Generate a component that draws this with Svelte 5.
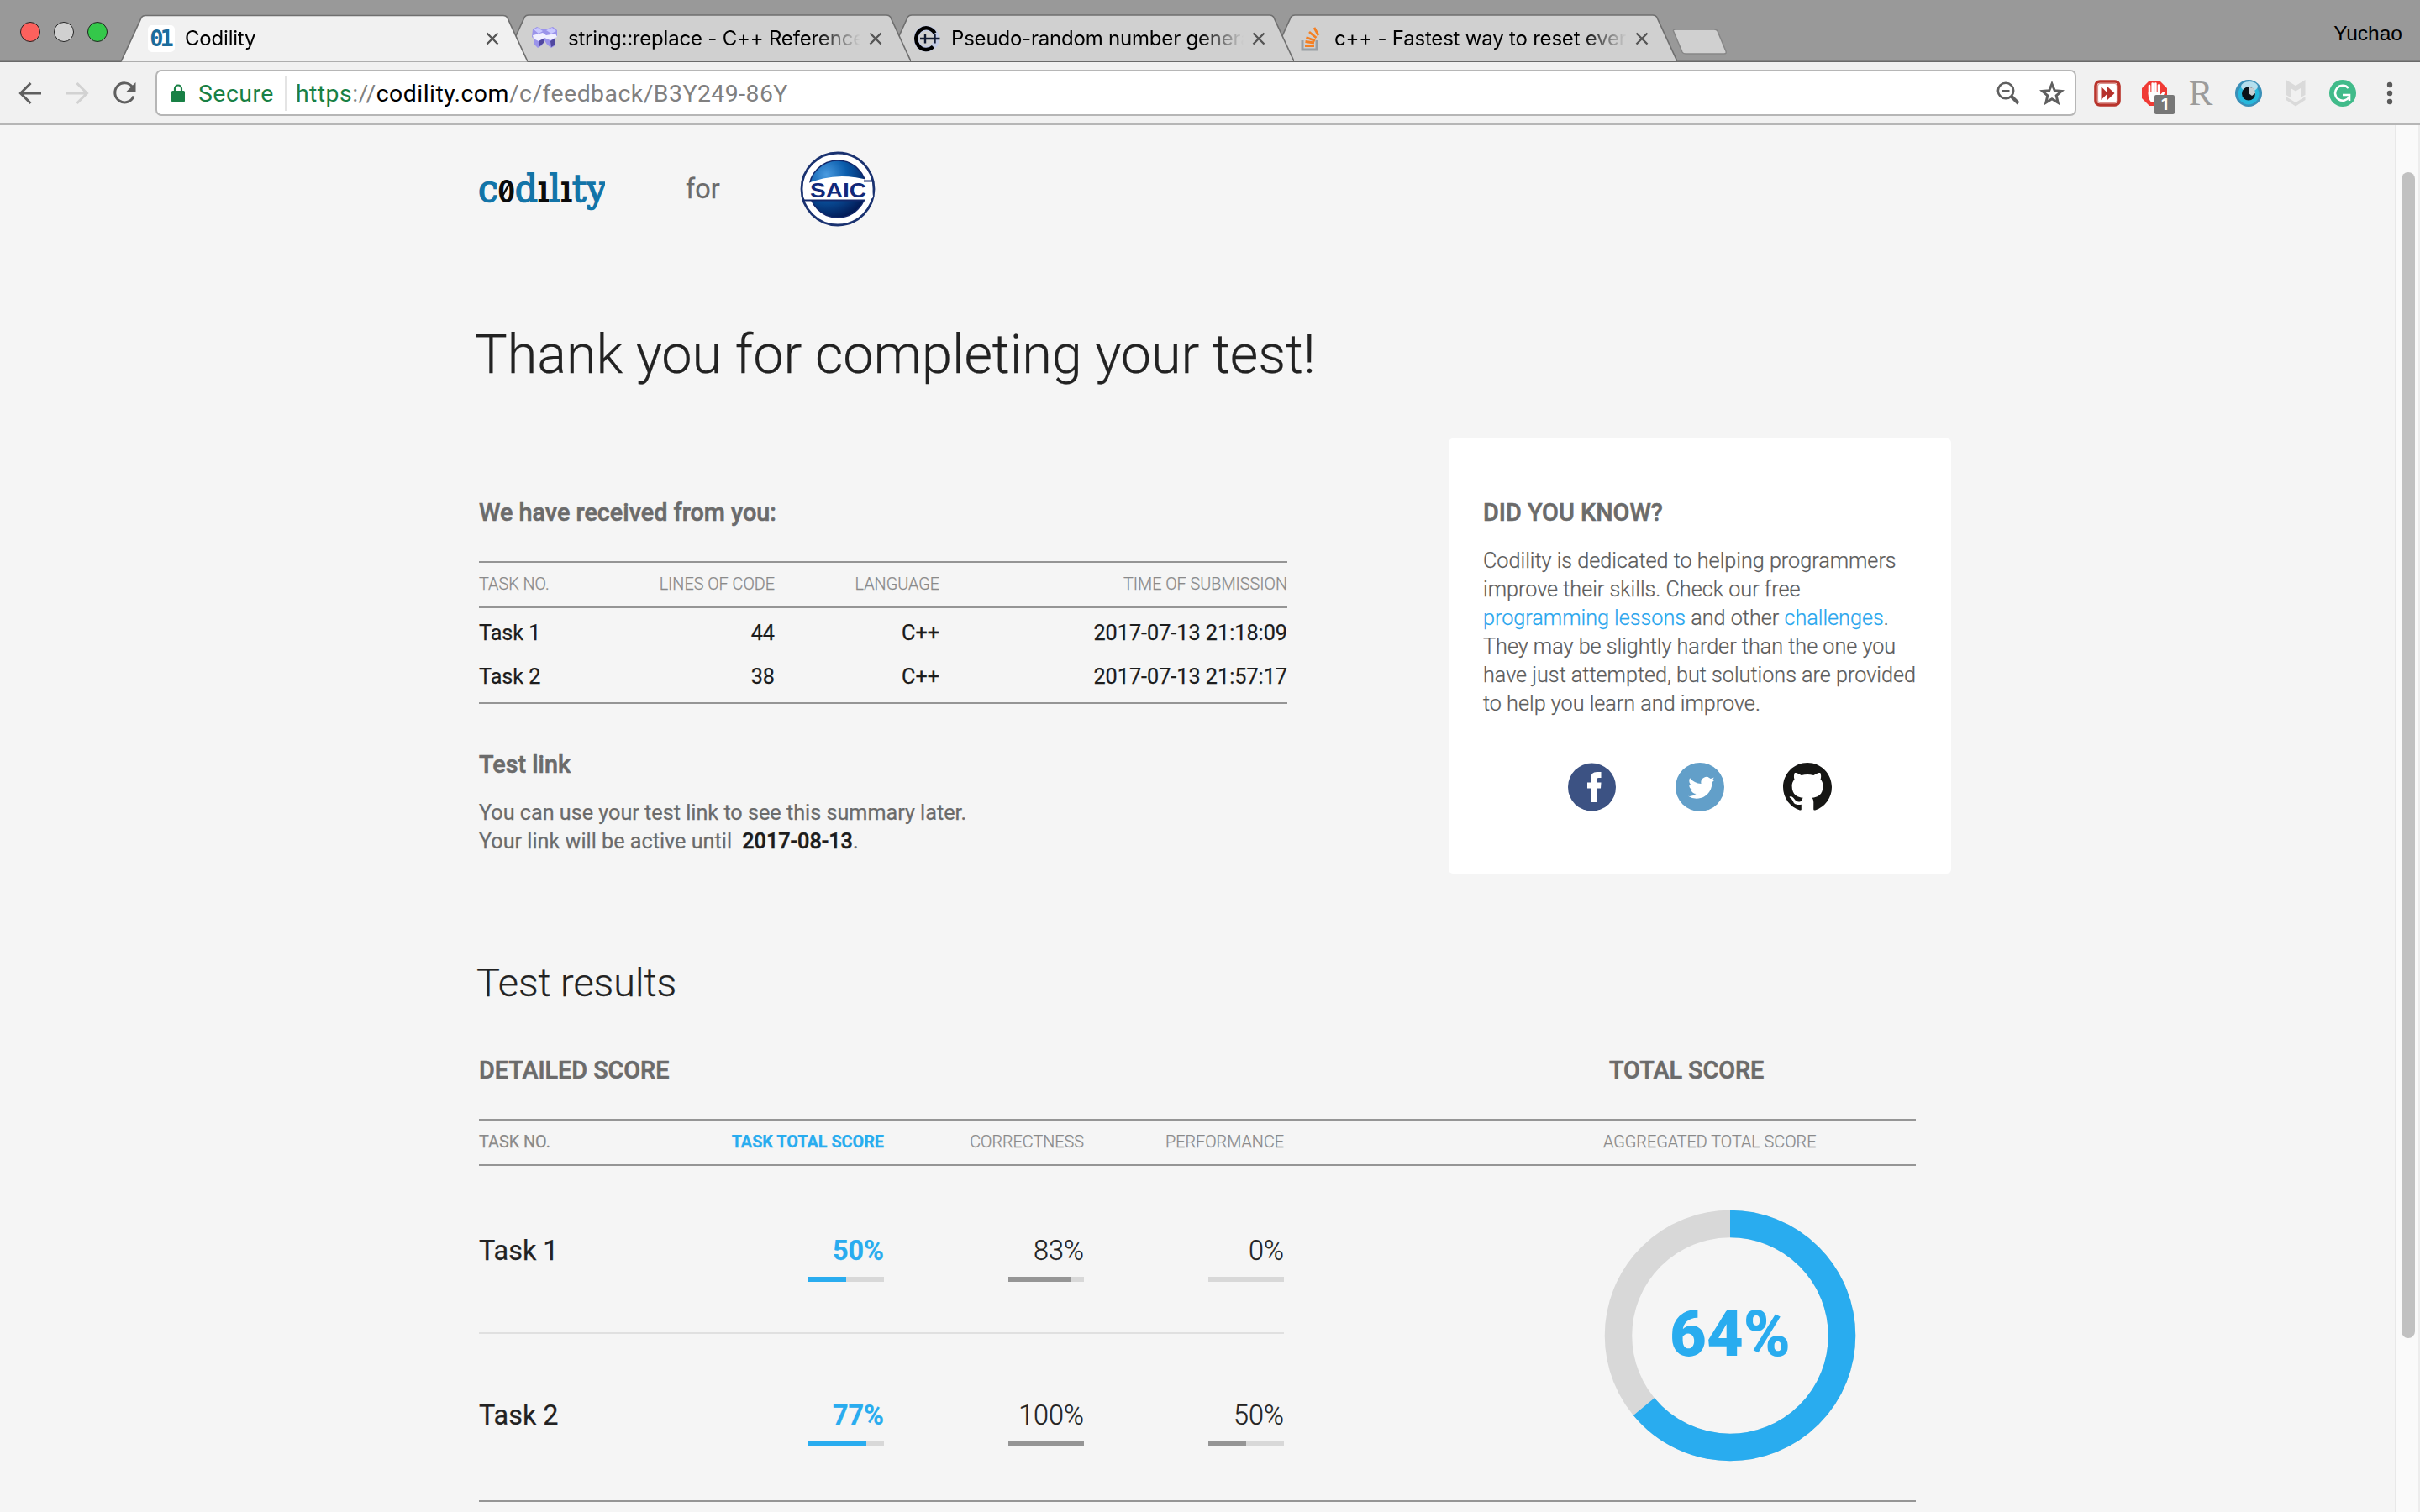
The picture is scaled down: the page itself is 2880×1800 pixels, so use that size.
<script>
  const tabs = [
    { title: 'Codility', icon: 'codility', active: true },
    { title: 'string::replace - C++ Reference', icon: 'cubes' },
    { title: 'Pseudo-random number generation', icon: 'cpp' },
    { title: 'c++ - Fastest way to reset every value', icon: 'so' },
  ];
  const submissions = [
    { task: 'Task 1', lines: 44, language: 'C++', time: '2017-07-13 21:18:09' },
    { task: 'Task 2', lines: 38, language: 'C++', time: '2017-07-13 21:57:17' },
  ];
  const scores = [
    { task: 'Task 1', values: [50, 83, 0] },
    { task: 'Task 2', values: [77, 100, 50] },
  ];
  const total = 64;
  const radius = 133;
  const ring = 2 * Math.PI * radius;
</script>

<div class="window">
  <header class="tabstrip">
    <div class="lights"><i class="red"></i><i class="idle"></i><i class="green"></i></div>
    <div class="tabs">
      {#each tabs as tab, i}
        <div class="tab tab{i}" class:active={tab.active}>
          <svg class="shape" viewBox="0 0 484 56">
            <path d="M0 56 L24.500 3 Q26 1 29 1 H455 Q458 1 459.500 3 L484 56" />
          </svg>
          {#if tab.icon === 'codility'}
            <span class="favicon badge01">01</span>
          {:else if tab.icon === 'cubes'}
            <svg class="favicon" viewBox="0 0 32 32">
              <path d="M2 5 L7 2 L14 5 L20 4 L26 2 L31 6 V13 L29 15 V24 L24 27 L19 23 L16 18 L13 24 L8 27 L4 23 L3 16 L1 14Z" fill="#9a93ea" />
              <path d="M3 5 L8 3 L14 7 L9 10Z M18 6 L25 3 L30 7 L24 10Z" fill="#c9c8ff" />
              <path d="M2 12 L14 9 L18 12 L29 10 L31 14 L23 18 L16 15 L9 19 L3 16Z" fill="#f0efff" />
              <path d="M9 19 L15 16 V21 L9 26Z M23 19 L29 15 V23 L24 26Z" fill="#5148a0" />
            </svg>
          {:else if tab.icon === 'cpp'}
            <svg class="favicon" viewBox="0 0 32 32">
              <circle cx="14.500" cy="16" r="15.500" fill="#c3cbe4" />
              <circle cx="14.500" cy="16" r="9" fill="#d0d0d0" />
              <path d="M24.500 9.500 A12 12.800 0 1 0 22.500 25.500" fill="none" stroke="#000" stroke-width="4.500" />
              <path d="M7 16 H30.500 M13 10.500 V21.500 M24.500 10.500 V21.500" fill="none" stroke="#111a33" stroke-width="2.400" />
            </svg>
          {:else}
            <svg class="favicon" viewBox="0 0 32 32">
              <path d="M6 18 V29 H23 V18" fill="none" stroke="#9a9fa4" stroke-width="3" />
              <path d="M9 24.500 H20 M9.500 19.500 L20 21 M10.500 14.500 L21 18.500 M14 8 L22.500 15 M20 3 L25 12" fill="none" stroke="#f48024" stroke-width="2.800" />
            </svg>
          {/if}
          <span class="title">{tab.title}</span>
          <svg class="close" viewBox="0 0 16 16"><path d="M1.500 1.500 L14.500 14.500 M14.500 1.500 L1.500 14.500" /></svg>
        </div>
      {/each}
    </div>
    <svg class="newtab" viewBox="0 0 66 32">
      <path d="M1.500 3 Q1 1 4 1 H50 Q53 1 54 3 L64 27 Q65 30 62 30 H16 Q13 30 12 28Z" fill="#d0d0d0" stroke="#868686" stroke-width="1.500" />
    </svg>
    <span class="user">Yuchao</span>
  </header>

  <nav class="toolbar">
    <div class="navicons">
      <svg viewBox="0 0 28 28"><path d="M27 14 H3 M14.500 2 L2.500 14 L14.500 26" fill="none" stroke="#5f5f5f" stroke-width="3" /></svg>
      <svg viewBox="0 0 28 28"><path d="M1 14 H25 M13.500 2 L25.500 14 L13.500 26" fill="none" stroke="#d2d2d2" stroke-width="3" /></svg>
      <svg viewBox="0 0 28 28">
        <path d="M23.500 6.500 A11.500 11.500 0 1 0 25 17.500" fill="none" stroke="#5f5f5f" stroke-width="3" />
        <path d="M27.500 1 V12.500 H16Z" fill="#5f5f5f" />
      </svg>
    </div>
    <div class="address">
      <svg class="lock" viewBox="0 0 16 22">
        <path d="M4 10 V5.500 A4 4 0 0 1 12 5.500 V10" fill="none" stroke="#188045" stroke-width="2.200" />
        <rect x="0" y="8" width="16" height="13.500" rx="1.500" fill="#188045" />
      </svg>
      <span class="secure">Secure</span>
      <span class="url"><b class="scheme">https</b>://<b class="host">codility.com</b>/c/feedback/B3Y249-86Y</span>
      <svg class="mag" viewBox="0 0 28 28">
        <circle cx="11" cy="11" r="9.200" fill="none" stroke="#5f5f5f" stroke-width="2.600" />
        <path d="M6.500 11 H15.500" stroke="#5f5f5f" stroke-width="2" />
        <path d="M18 18 L26 26" stroke="#5f5f5f" stroke-width="4" />
      </svg>
      <svg class="star" viewBox="0 0 30 30">
        <path d="M15 4 L18.200 11.700 L26.500 12.400 L20.200 17.900 L22.100 26 L15 21.700 L7.900 26 L9.800 17.900 L3.500 12.400 L11.800 11.700Z" fill="none" stroke="#5f5f5f" stroke-width="3" />
      </svg>
    </div>
    <div class="extensions">
      <svg viewBox="0 0 32 32">
        <rect x="2" y="2" width="28" height="28" rx="5" fill="#fff" stroke="#b9342c" stroke-width="3.600" />
        <rect x="4.500" y="4.500" width="23" height="23" rx="3" fill="none" stroke="#dc928d" stroke-width="1.200" />
        <path d="M8.500 8 L16.500 16 L8.500 24Z M16 8 L24.500 16 L16 24Z" fill="#b5302a" />
      </svg>
      <div class="blocker">
        <svg viewBox="0 0 32 32">
          <path d="M10 1 H22 L31 10 V22 L22 31 H10 L1 22 V10Z" fill="#f03a35" />
          <path d="M10 17 V7 M13.700 15 V4.500 M17.400 15 V4.500 M21 16 V6.500" stroke="#fff" stroke-width="2.600" stroke-linecap="round" />
          <path d="M8.700 14 H22.300 V18.500 L26 14.500 Q28.500 14 28 16 L23 27 H12.500 Q8.700 23 8.700 18Z" fill="#fff" />
        </svg>
        <span>1</span>
      </div>
      <span class="letter">R</span>
      <svg viewBox="0 0 32 32">
        <circle cx="16" cy="16" r="16" fill="#3a8fb8" />
        <circle cx="16" cy="17" r="12.500" fill="#27b8dc" />
        <ellipse cx="17" cy="8" rx="10" ry="6" fill="#b4dfee" />
        <circle cx="16" cy="16.500" r="8" fill="#0b1218" />
        <path d="M16 9 Q24 8 24 16 L20 19 L16 16Z" fill="#c7cfd3" />
      </svg>
      <svg viewBox="0 0 32 32">
        <path d="M4.500 0 L16 7 L27.500 0 V18 L22 21 V10 L16 13.500 L10 10 V21 L4.500 18Z" fill="#dadada" />
        <path d="M4.500 20 L16 27 L27.500 20 V24 L16 31.500 L4.500 24Z" fill="#dadada" />
      </svg>
      <svg viewBox="0 0 32 32">
        <circle cx="16" cy="16" r="16" fill="#41bb8a" />
        <path d="M22.800 9.800 A9 9 0 1 0 24 20" fill="none" stroke="#fff" stroke-width="2.600" />
        <path d="M16 18 H25 M24 16.800 V25" fill="none" stroke="#fff" stroke-width="2.600" />
      </svg>
      <svg class="dots" viewBox="0 0 8 28"><circle cx="4" cy="4" r="3.200" /><circle cx="4" cy="14" r="3.200" /><circle cx="4" cy="24" r="3.200" /></svg>
    </div>
  </nav>

  <div class="viewport">
    <main>
      <div class="brand">
        <svg class="codility" viewBox="0 0 150 50">
          <text x="-1" y="36.500" textLength="153" lengthAdjust="spacingAndGlyphs">c<tspan class="zero">0</tspan>d<tspan class="dark">ı</tspan>l<tspan class="dark">ı</tspan>ty</text>
          <path d="M27 32 L36 16" stroke="#0a0a0a" stroke-width="2.500" />
        </svg>
        <span class="for">for</span>
        <svg class="saic" viewBox="0 0 90 90">
          <defs>
            <radialGradient id="globe" cx="0.3" cy="0.25" r="0.8">
              <stop offset="0" stop-color="#4a9be0" />
              <stop offset="0.45" stop-color="#0a5cab" />
              <stop offset="1" stop-color="#021a55" />
            </radialGradient>
          </defs>
          <circle cx="45" cy="45" r="43" fill="#fff" stroke="#1a3270" stroke-width="2.800" />
          <circle cx="45" cy="45" r="34" fill="url(#globe)" stroke="#12286b" stroke-width="1.500" />
          <path d="M5 40 Q45 22 85 36 L87 54 Q86 58 80 58 H10 Q3 58 4 50Z" fill="#fff" />
          <path d="M76 35.500 H87 M4 58.500 H78" stroke="#12286b" stroke-width="2" />
          <text x="12" y="54.500" textLength="67" lengthAdjust="spacingAndGlyphs">SAIC</text>
        </svg>
      </div>

      <h1>Thank you for completing your test!</h1>

      <div class="summary">
        <section class="received">
          <h3>We have received from you:</h3>
          <div class="grid head">
            <span>TASK NO.</span><span>LINES OF CODE</span><span>LANGUAGE</span><span>TIME OF SUBMISSION</span>
          </div>
          <div class="body">
            {#each submissions as s}
              <div class="grid row">
                <span>{s.task}</span><span>{s.lines}</span><span>{s.language}</span><span class="time">{s.time}</span>
              </div>
            {/each}
          </div>
          <h3 class="linkhead">Test link</h3>
          <p class="line1">You can use your test link to see this summary later.</p>
          <p>Your link will be active until <strong>2017-08-13</strong>.</p>
        </section>

        <aside>
          <h3>DID YOU KNOW?</h3>
          <p>
            Codility is dedicated to helping programmers<br />
            improve their skills. Check our free<br />
            <a href="#lessons">programming lessons</a> and other <a href="#challenges">challenges</a>.<br />
            They may be slightly harder than the one you<br />
            have just attempted, but solutions are provided<br />
            to help you learn and improve.
          </p>
          <div class="social">
            <svg viewBox="0 0 58 58">
              <circle cx="28.500" cy="29" r="28.500" fill="#3c5283" />
              <path d="M27 47 V30.500 H23 V23.500 H27 V19 Q27 11 34.500 11 H39.500 V18 H36.500 Q34 18 34 20.500 V23.500 H39.500 L39 30.500 H34 V47Z" fill="#fff" />
            </svg>
            <svg viewBox="0 0 58 58">
              <circle cx="29" cy="29" r="29" fill="#629fc9" />
              <path transform="translate(15 14) scale(1.32)" fill="#fff" d="M23.950 4.570a10 10 0 0 1-2.820.775 4.960 4.960 0 0 0 2.160-2.720c-.95.555-2 .960-3.130 1.180a4.920 4.920 0 0 0-8.380 4.480C7.690 8.100 4.070 6.130 1.640 3.160a4.820 4.820 0 0 0-.660 2.480c0 1.710.870 3.210 2.190 4.100a4.900 4.900 0 0 1-2.230-.620v.060a4.920 4.920 0 0 0 3.950 4.830 5 5 0 0 1-2.210.080 4.940 4.940 0 0 0 4.600 3.420A9.870 9.870 0 0 1 0 19.540a14 14 0 0 0 7.550 2.210c9.050 0 14-7.500 14-13.980 0-.210 0-.420-.020-.630a9.940 9.940 0 0 0 2.460-2.550z" />
            </svg>
            <svg viewBox="0 0 58 58">
              <path transform="scale(3.625)" fill="#161614" d="M8 0C3.580 0 0 3.580 0 8c0 3.540 2.290 6.530 5.470 7.590.4.070.55-.17.55-.38 0-.19-.01-.82-.01-1.490-2.010.37-2.530-.49-2.690-.94-.09-.23-.48-.94-.82-1.130-.28-.15-.68-.52-.01-.53.630-.01 1.080.58 1.230.82.720 1.210 1.870.87 2.330.66.070-.52.280-.87.510-1.070-1.780-.2-3.640-.89-3.640-3.950 0-.87.310-1.590.82-2.150-.08-.2-.36-1.020.08-2.120 0 0 .67-.21 2.200.82.640-.18 1.320-.27 2-.27s1.360.09 2 .27c1.530-1.040 2.200-.82 2.200-.82.440 1.100.16 1.920.08 2.120.510.56.820 1.270.820 2.150 0 3.070-1.870 3.750-3.650 3.950.290.250.540.730.540 1.480 0 1.070-.01 1.930-.01 2.200 0 .210.150.460.550.380A8.010 8.010 0 0 0 16 8c0-4.420-3.580-8-8-8z" />
            </svg>
          </div>
        </aside>
      </div>

      <h2>Test results</h2>
      <div class="headings"><h3>DETAILED SCORE</h3><h3>TOTAL SCORE</h3></div>
      <div class="scorehead">
        <span class="first">TASK NO.</span><span class="tts">TASK TOTAL SCORE</span><span>CORRECTNESS</span><span>PERFORMANCE</span><span class="agg">AGGREGATED TOTAL SCORE</span>
      </div>
      <div class="results">
        <div class="tasks">
          {#each scores as s}
            <div class="task">
              <span class="name">{s.task}</span>
              {#each s.values as v, i}
                <div class="score" class:primary={i === 0}>
                  <span>{v}%</span>
                  <div class="bar"><div class="fill" style="width: {v}%"></div></div>
                </div>
              {/each}
            </div>
          {/each}
        </div>
        <svg class="donut" viewBox="0 0 300 300">
          <circle cx="150" cy="150" r={radius} fill="none" stroke="#d8d8d8" stroke-width="32.500" />
          <circle cx="150" cy="150" r={radius} fill="none" stroke="#29acef" stroke-width="32.500" stroke-dasharray="{(ring * total) / 100} {ring}" transform="rotate(-90 150 150)" />
          <text x="150" y="174" text-anchor="middle">{total}%</text>
        </svg>
      </div>
    </main>
    <div class="scrollbar"><div class="thumb"></div></div>
  </div>
</div>

<style>
  :global(body) { margin: 0; background: #f5f5f5; }
  .window {
    width: 2880px; height: 1800px; overflow: hidden; display: flex; flex-direction: column;
    font-family: Roboto, "Liberation Sans", sans-serif; background: #f5f5f5; color: #222;
  }
  .window :global(*) { box-sizing: border-box; }
  svg { display: block; flex: none; }
  h1, h2, h3, p { margin: 0; font-weight: 400; white-space: nowrap; }

  .tabstrip {
    height: 74px; flex: none; display: flex; align-items: flex-start; background: #999;
    box-shadow: inset 0 -1.5px #6a6a6a;
  }
  .lights { display: flex; gap: 16px; padding: 26px 16px 0 24px; width: 144px; }
  .lights i { width: 24px; height: 24px; border-radius: 50%; flex: none; border: 1px solid; }
  .red { background: #fc615d; border-color: #e2463f; }
  .idle { background: #d0d0d0; border-color: #bdbdbd; }
  .green { background: #34c84a; border-color: #22a535; }
  .tabs { display: flex; padding-top: 17px; }
  .tab {
    position: relative; width: 484px; height: 57px; flex: none; display: flex; align-items: center;
    padding: 1px 0 0 32px; margin-left: -28px;
    font: 24px/32px Inter, sans-serif; color: #000;
  }
  .tab0 { margin-left: 0; z-index: 4; }
  .tab1 { z-index: 3; }
  .tab2 { z-index: 2; }
  .tab3 { z-index: 1; }
  .shape { position: absolute; left: 0; top: 0; width: 484px; height: 56px; }
  .shape path { fill: #d0d0d0; stroke: #6f6f6f; stroke-width: 1.6; }
  .active .shape { height: 57px; }
  .active .shape path { fill: #f1f1f1; }
  .favicon { position: relative; width: 32px; height: 32px; }
  .badge01 {
    background: #fff; border-radius: 5px; color: #1b6c9c; text-align: center;
    font: bold 27px/32px "DejaVu Sans Mono", monospace; letter-spacing: -4px; text-indent: -3px;
  }
  .title {
    position: relative; width: 348px; margin-left: 12px; overflow: hidden; white-space: nowrap; letter-spacing: -0.2px;
    -webkit-mask-image: linear-gradient(90deg, #000 295px, transparent 348px);
    mask-image: linear-gradient(90deg, #000 295px, transparent 348px);
  }
  .close { position: relative; width: 16px; height: 16px; margin-left: 10px; }
  .close path { stroke: #555; stroke-width: 2.4; fill: none; }
  .newtab { width: 66px; height: 32px; margin: 34px 0 0 -6px; }
  .user { margin: 25px 21px 0 auto; font: 24.5px/30px "Liberation Sans", sans-serif; color: #000; }

  .toolbar {
    height: 75px; flex: none; display: flex; align-items: center; background: #f1f1f1;
    border-bottom: 2px solid #b6b6b6;
  }
  .navicons { width: 185px; display: flex; gap: 28px; padding-left: 22px; }
  .navicons svg { width: 28px; height: 28px; }
  .address {
    width: 2286px; height: 55px; display: flex; align-items: center; background: #fff;
    border: 2px solid #b6b6b6; border-radius: 7px; padding-left: 17px; font: 28.4px/40px Roboto, sans-serif;
  }
  .lock { width: 16px; height: 22px; }
  .secure { color: #188045; width: 105px; margin-left: 16px; padding-top: 2px; border-right: 2px solid #e4e4e4; letter-spacing: 0.5px; }
  .url { color: #808080; margin-left: 11px; padding-top: 2px; letter-spacing: 0.47px; }
  .url b { font-weight: 400; }
  .scheme { color: #188045; }
  .host { color: #000; }
  .mag { width: 28px; height: 28px; margin-left: auto; }
  .star { width: 30px; height: 30px; margin: 0 12px 0 23px; }
  .extensions { display: flex; align-items: center; gap: 24px; padding-left: 21px; }
  .extensions svg { width: 32px; height: 32px; }
  .blocker { position: relative; }
  .blocker span {
    position: absolute; left: 16px; top: 18px; width: 24px; height: 23px; border-radius: 2px;
    background: #777; color: #fff; font: bold 19px/23px Inter, sans-serif; text-align: center;
  }
  .letter { width: 32px; font: 43px/32px "Liberation Serif", serif; color: #9b9b9b; text-align: center; text-indent: -2px; }
  .extensions .dots { width: 8px; height: 28px; margin-left: 12px; fill: #5a5a5a; }

  .viewport { flex: 1; min-height: 0; display: flex; margin-top: -1px; }
  main { width: 1752px; margin-left: 570px; flex: none; -webkit-text-stroke: 0.25px; }
  .brand { height: 110px; display: flex; align-items: center; padding-top: 44px; }
  .codility { width: 150px; height: 50px; margin-top: 5px; }
  .codility text { font: 45px "DejaVu Serif", serif; fill: #1274a8; stroke: #1274a8; stroke-width: 1.5px; }
  .codility .zero { font-size: 33px; fill: #0a0a0a; stroke: #0a0a0a; stroke-width: 2px; }
  .codility .dark { fill: #0a0a0a; stroke: #0a0a0a; }
  .for { font-size: 32.4px; line-height: 44px; color: #6b6b6b; margin: 0 0 0 96px; width: 136px; }
  .saic { width: 90px; height: 90px; }
  .saic text { font: bold 23px "Liberation Sans", sans-serif; fill: #10297a; }

  h1 { font-size: 64.8px; line-height: 80px; font-weight: 300; margin: 124px 0 0 -5px; color: #222; letter-spacing: -0.05px; }
  .summary { display: flex; justify-content: space-between; margin-top: 60px; height: 518px; }
  h3 { font-size: 28.8px; line-height: 40px; font-weight: 500; color: #6b6b6b; -webkit-text-stroke: 0.6px; }
  .received { width: 962px; padding-top: 68px; }
  .grid { display: grid; grid-template-columns: 176px 176px 196px 414px; }
  .grid span + span { text-align: right; }
  .head {
    margin-top: 38px; height: 56px; border-top: 2px solid #959595; border-bottom: 2px solid #959595;
    font-size: 19.8px; line-height: 52px; font-weight: 300; color: #8a8a8a;
  }
  .body { border-bottom: 2px solid #959595; padding: 4px 0; }
  .row { font-size: 25.2px; line-height: 52px; color: #1c1c1c; }
  .linkhead { margin-top: 52px; }
  .received p { font-size: 25.2px; line-height: 34px; color: #6b6b6b; }
  .received .line1 { margin-top: 21px; }
  .received strong { font-weight: 500; color: #1c1c1c; margin-left: 6px; -webkit-text-stroke: 0.5px; }

  aside { width: 598px; background: #fff; border-radius: 5px; padding: 68px 42px 0 41px; }
  aside p { font-size: 25.2px; line-height: 34px; font-weight: 300; color: #5c5c5c; margin-top: 21px; }
  aside a { color: #29a6ee; text-decoration: none; }
  .social { display: flex; justify-content: center; gap: 70px; margin-top: 53px; }
  .social svg { width: 58px; height: 58px; }

  h2 { font-size: 46.8px; line-height: 60px; font-weight: 300; margin: 100px 0 0 -3px; color: #222; }
  .headings { display: flex; margin-top: 54px; }
  .headings h3 { width: 1345px; letter-spacing: -0.05px; }
  .headings h3 + h3 { width: auto; }
  .scorehead {
    display: grid; grid-template-columns: 244px 238px 238px 238px 1fr; margin-top: 38px; width: 1710px; height: 56px;
    border-top: 2px solid #959595; border-bottom: 2px solid #959595;
    font-size: 19.8px; line-height: 52px; font-weight: 300; color: #8a8a8a; text-align: right;
  }
  .scorehead .first { font-weight: 400; text-align: left; }
  .scorehead .tts { font-weight: 700; color: #29acef; }
  .scorehead .agg { text-align: left; padding-left: 380px; }
  .results { display: flex; width: 1710px; height: 400px; border-bottom: 2px solid #959595; }
  .tasks { width: 958px; }
  .task { display: grid; grid-template-columns: 244px 238px 238px 238px; height: 200px; padding-top: 80px; border-bottom: 2px solid #e0e0e0; font-size: 32.4px; line-height: 42px; color: #222; }
  .task + .task { height: 196px; padding-top: 76px; border-bottom: 0; }
  .score { display: flex; flex-direction: column; align-items: flex-end; font-weight: 300; }
  .primary { font-weight: 700; color: #29acef; }
  .bar { width: 90px; height: 6px; margin-top: 10px; background: #d8d8d8; }
  .fill { height: 6px; background: #959595; }
  .primary .fill { background: #29acef; }
  .donut { width: 300px; height: 300px; margin: 52px 0 0 381px; }
  .donut text { font: 900 75.6px Roboto, sans-serif; fill: #29acef; }

  .scrollbar { margin-left: auto; width: 30px; border-left: 2px solid #e8e8e8; border-right: 2px solid #ededed; background: #fafafa; padding: 56px 0 0 6px; margin-top: 1px; }
  .thumb { width: 16px; height: 1388px; border-radius: 8px; background: #c1c1c1; }
</style>
